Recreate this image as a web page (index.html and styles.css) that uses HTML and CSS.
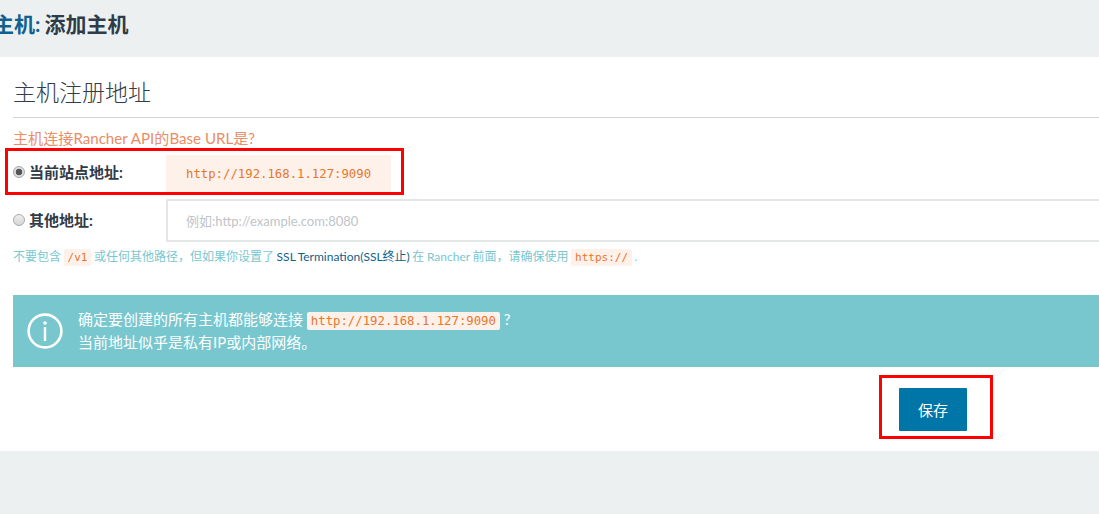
FILE: index.html
```html
<!DOCTYPE html>
<html lang="zh-CN">
<head>
<meta charset="utf-8">
<title>主机: 添加主机</title>
<link rel="stylesheet" href="styles.css">
</head>
<body>
<header class="page-head">
  <h1 class="page-title"><a class="crumb">主机:</a> 添加主机</h1>
</header>
<main class="panel">
  <h2 class="section-title">主机注册地址</h2>
  <p class="question">主机连接Rancher API的Base URL是?</p>
  <div class="row row-current">
    <label class="radio-label"><span class="radio checked"></span>当前站点地址:</label>
    <code class="current-url">http://192.168.1.127:9090</code>
  </div>
  <div class="row row-other">
    <label class="radio-label"><span class="radio"></span>其他地址:</label>
    <div class="url-input">例如:http://example.com:8080</div>
  </div>
  <p class="help">不要包含 <code class="chip">/v1</code> 或任何其他路径，但如果你设置了 <a class="help-link">SSL Termination(SSL终止)</a> 在 Rancher 前面，请确保使用 <code class="chip">https://</code> .</p>
  <div class="alert">
    <svg class="alert-icon" width="36" height="36" viewBox="0 0 36 36" aria-hidden="true">
      <circle cx="18" cy="18" r="16.4" fill="none" stroke="#fff" stroke-width="2.6"/>
      <circle cx="18" cy="10" r="1.8" fill="#fff"/>
      <rect x="16.8" y="14" width="2.4" height="14" fill="#fff"/>
    </svg>
    <div class="alert-text">
      <div class="alert-line">确定要创建的所有主机都能够连接 <code class="chip chip-alert">http://192.168.1.127:9090</code> ?</div>
      <div class="alert-line">当前地址似乎是私有IP或内部网络。</div>
    </div>
  </div>
  <div class="actions"><button class="save">保存</button></div>
</main>
<div class="mark mark-url"></div>
<div class="mark mark-save"></div>
</body>
</html>
```
FILE: styles.css
```css
* { box-sizing: border-box; }
html, body { margin: 0; padding: 0; }
body {
  position: relative;
  width: 1099px;
  height: 514px;
  overflow: hidden;
  background: #ecf0f1;
  color: #2f3b47;
  font-family: "Lato", "Noto Sans CJK SC", sans-serif;
  font-size: 14px;
}
.page-head { height: 57px; padding: 12px 0 0; margin-left: -7px; }
.page-title { margin: 0; font-size: 21px; line-height: 24px; font-weight: 700; color: #2f3b47; word-spacing: -1px; }
.crumb { color: #0f628f; }
.panel { height: 394px; background: #fff; padding: 19px 0 0 13px; }
.section-title {
  margin: 0;
  height: 42px;
  font-size: 23px;
  line-height: 32px;
  font-weight: 300;
  color: #333c47;
  border-bottom: 1px solid #d4d4d6;
}
.question { margin: 9px 0 0; font-size: 15.1px; line-height: 22px; color: #e98e66; }
.row { display: flex; align-items: center; }
.row-current { height: 38px; margin-top: 6px; }
.row-current .radio-label { margin-bottom: 5px; }
.row-other { height: 43px; margin-top: 6px; }
.row-other .radio-label { margin-bottom: 2px; }
.radio-label { display: flex; align-items: center; width: 153px; font-weight: 700; font-size: 15px; color: #2f3b47; }
.radio {
  width: 12px;
  height: 12px;
  margin-right: 4px;
  border-radius: 50%;
  border: 1px solid #a9a9a9;
  background: linear-gradient(#eeeeee, #d6d6d6);
}
.radio.checked { background: radial-gradient(circle, #555 0 3px, #dcdcdc 3.6px); }
.current-url {
  width: 225px;
  height: 38px;
  padding: 9px 0 0 20px;
  background: #fdf1e9;
  color: #e8762d;
  font-family: "DejaVu Sans Mono", monospace;
  font-size: 12.3px;
  line-height: 20px;
}
.url-input {
  flex: 1;
  height: 43px;
  padding-left: 18px;
  border: 2px solid #e4e7e8;
  border-right: 0;
  border-radius: 2px 0 0 2px;
  color: #c0c4c8;
  font-size: 13px;
  line-height: 40px;
}
.help { margin: 6px 0 0; font-size: 12px; line-height: 18px; color: #78c7cf; white-space: nowrap; word-spacing: -0.5px; }
.help-link { color: #0f5f8c; }
.chip {
  padding: 2px 4px;
  background: #fdf1e9;
  color: #e8762d;
  border-radius: 2px;
  font-family: "DejaVu Sans Mono", monospace;
  font-size: 11px;
}
.alert {
  display: flex;
  align-items: center;
  gap: 15px;
  height: 72px;
  margin-top: 28px;
  padding-left: 14px;
  background: #78c7cf;
  color: #fff;
}
.alert-text { font-size: 15px; line-height: 21px; }
.alert-line { white-space: nowrap; }
.chip-alert { font-size: 12.3px; padding: 2px 4px; }
.actions { display: flex; padding: 21px 0 0 886px; }
.save {
  width: 68px;
  height: 43px;
  border: 0;
  border-radius: 1px;
  background: #0075a8;
  color: #fff;
  font-family: inherit;
  font-size: 15px;
}
.mark { position: absolute; border: 3px solid #f00; }
.mark-url { left: 5px; top: 148px; width: 399px; height: 47px; }
.mark-save { left: 879px; top: 375px; width: 114px; height: 64px; }
```
